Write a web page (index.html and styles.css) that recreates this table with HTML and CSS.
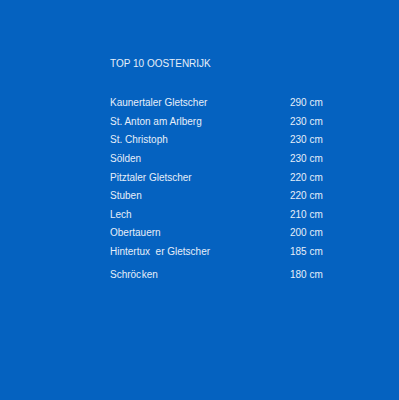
FILE: index.html
```html
<!DOCTYPE html>
<html lang="de">
<head>
<meta charset="utf-8">
<link rel="stylesheet" href="styles.css">
</head>
<body>
<main class="panel">
  <h1 class="title">TOP 10 OOSTENRIJK</h1>
  <ul class="list">
    <li class="row"><span class="name">Kaunertaler Gletscher</span><span class="val">290 cm</span></li>
    <li class="row"><span class="name">St. Anton am Arlberg</span><span class="val">230 cm</span></li>
    <li class="row"><span class="name">St. Christoph</span><span class="val">230 cm</span></li>
    <li class="row"><span class="name">Sölden</span><span class="val">230 cm</span></li>
    <li class="row"><span class="name">Pitztaler Gletscher</span><span class="val">220 cm</span></li>
    <li class="row"><span class="name">Stuben</span><span class="val">220 cm</span></li>
    <li class="row"><span class="name">Lech</span><span class="val">210 cm</span></li>
    <li class="row"><span class="name">Obertauern</span><span class="val">200 cm</span></li>
    <li class="row"><span class="name">Hintertux&nbsp; er Gletscher</span><span class="val">185 cm</span></li>
    <li class="row last"><span class="name">Schröc<span class="sp">k</span>en</span><span class="val">180 cm</span></li>
  </ul>
</main>
</body>
</html>
```
FILE: styles.css
```css
html, body {
  margin: 0;
  padding: 0;
  background: #0562c0;
  width: 399px;
  height: 400px;
  overflow: hidden;
}
.panel {
  padding: 55.4px 0 0 110px;
  font-family: "Liberation Sans", Arial, sans-serif;
  font-size: 10px;
  color: #e6eef9;
}
.title {
  margin: 0;
  font-size: 10px;
  font-weight: normal;
  line-height: 18.6px;
}
.list {
  list-style: none;
  margin: 20.3px 0 0 0;
  padding: 0;
}
.row {
  display: grid;
  grid-template-columns: 180px auto;
  line-height: 18.6px;
}
.row.last {
  margin-top: 4.4px;
}
.sp {
  margin-left: 0.6px;
}
```
